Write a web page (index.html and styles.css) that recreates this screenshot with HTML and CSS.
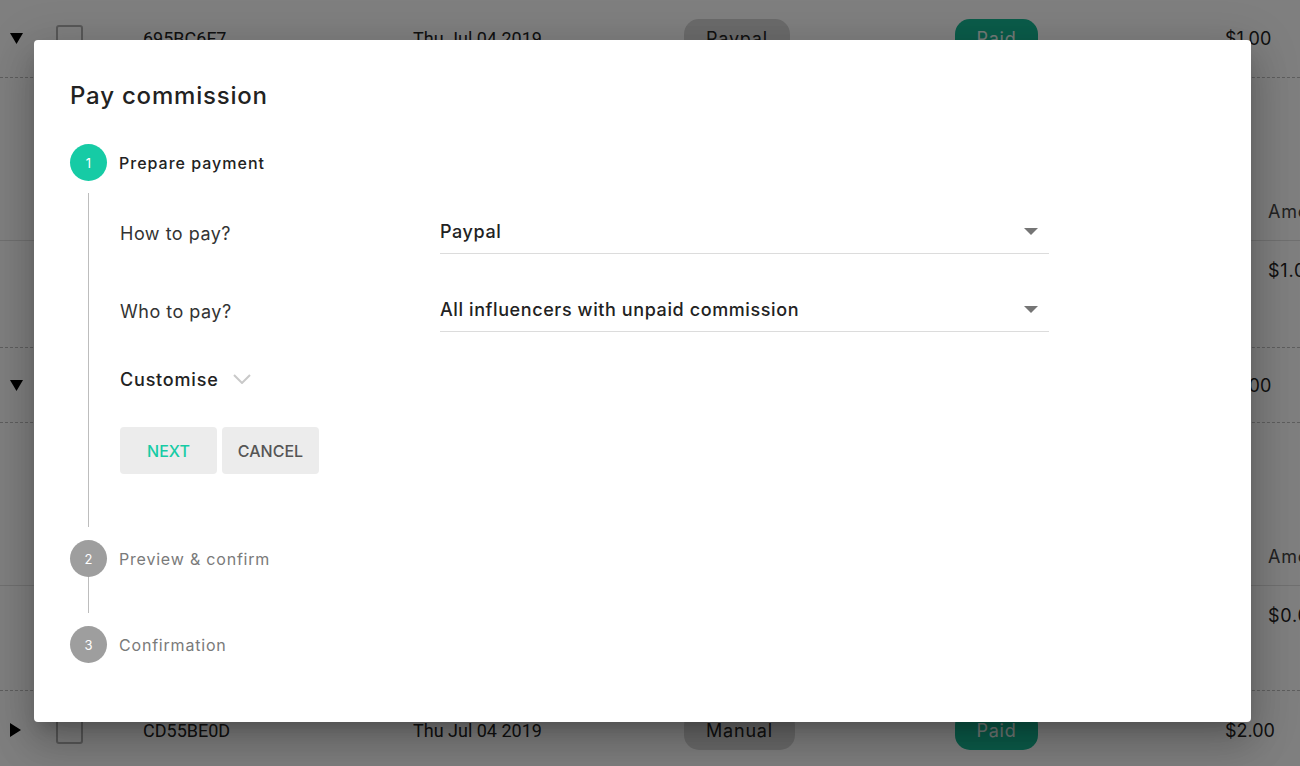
FILE: index.html
```html
<!DOCTYPE html>
<html lang="en">
<head>
<meta charset="utf-8">
<title>Pay commission</title>
<link rel="stylesheet" href="styles.css">
</head>
<body>
<div class="page">
  <div class="row row-a">
    <div class="cell tri"><svg width="13" height="11" viewBox="0 0 13 11"><polygon points="0,0 13,0 6.5,11" fill="#000"/></svg></div>
    <div class="cell"><span class="checkbox"></span></div>
    <div class="cell mono">695BC6F7</div>
    <div class="cell mono">Thu Jul 04 2019</div>
    <div class="cell"><span class="chip chip-grey">Paypal</span></div>
    <div class="cell"><span class="chip chip-green">Paid</span></div>
    <div class="cell amount">$1.00</div>
  </div>
  <div class="expand expand-a">
    <div class="subrow subhead"><span class="subcell">Amount</span></div>
    <div class="subrow subdata"><span class="subcell">$1.00</span></div>
  </div>
  <div class="row row-b">
    <div class="cell tri"><svg width="13" height="11" viewBox="0 0 13 11"><polygon points="0,0 13,0 6.5,11" fill="#000"/></svg></div>
    <div class="cell"></div>
    <div class="cell"></div>
    <div class="cell"></div>
    <div class="cell"></div>
    <div class="cell"></div>
    <div class="cell amount">$1.00</div>
  </div>
  <div class="expand expand-b">
    <div class="subrow subhead"><span class="subcell">Amount</span></div>
    <div class="subrow subdata"><span class="subcell">$0.00</span></div>
  </div>
  <div class="row row-c">
    <div class="cell tri"><svg width="11" height="14" viewBox="0 0 11 14"><polygon points="0,0 11,7 0,14" fill="#000"/></svg></div>
    <div class="cell"><span class="checkbox"></span></div>
    <div class="cell mono">CD55BE0D</div>
    <div class="cell mono">Thu Jul 04 2019</div>
    <div class="cell"><span class="chip chip-grey">Manual</span></div>
    <div class="cell"><span class="chip chip-green">Paid</span></div>
    <div class="cell amount">$2.00</div>
  </div>
</div>

<div class="backdrop"></div>

<div class="dialog" role="dialog">
  <h2 class="dialog-title">Pay commission</h2>
  <div class="stepper">
    <div class="step">
      <div class="step-head">
        <span class="step-icon active">1</span>
        <span class="step-label active">Prepare payment</span>
      </div>
      <div class="step-body">
        <div class="field">
          <span class="field-label">How to pay?</span>
          <div class="select">
            <span class="select-value">Paypal</span>
            <svg class="select-arrow" width="14" height="7" viewBox="0 0 14 7"><polygon points="0,0 14,0 7,7" fill="#757575"/></svg>
          </div>
        </div>
        <div class="field field-2">
          <span class="field-label">Who to pay?</span>
          <div class="select">
            <span class="select-value">All influencers with unpaid commission</span>
            <svg class="select-arrow" width="14" height="7" viewBox="0 0 14 7"><polygon points="0,0 14,0 7,7" fill="#757575"/></svg>
          </div>
        </div>
        <div class="customise">
          <span>Customise</span>
          <svg width="18" height="10" viewBox="0 0 18 10"><polyline points="1,1 9,9 17,1" fill="none" stroke="#c9c9c9" stroke-width="2"/></svg>
        </div>
        <div class="actions">
          <button class="btn btn-next">NEXT</button>
          <button class="btn btn-cancel">CANCEL</button>
        </div>
      </div>
    </div>
    <div class="step step-2">
      <div class="step-head">
        <span class="step-icon">2</span>
        <span class="step-label">Preview &amp; confirm</span>
      </div>
      <div class="connector"></div>
    </div>
    <div class="step step-3">
      <div class="step-head">
        <span class="step-icon">3</span>
        <span class="step-label">Confirmation</span>
      </div>
    </div>
  </div>
</div>
</body>
</html>
```

FILE: styles.css
```css
* { box-sizing: border-box; }

html, body {
  margin: 0;
  padding: 0;
}

body {
  width: 1300px;
  height: 766px;
  overflow: hidden;
  background: #fff;
  font-family: Inter, "Open Sans", sans-serif;
  color: #222;
  position: relative;
}

/* ---------- background table ---------- */
.page {
  width: 1300px;
}

.row {
  display: grid;
  grid-template-columns: 56px 87px 270px 271px 271px 270px 1fr;
  align-items: center;
  border-bottom: 1px dashed #bdbdbd;
}

.row-a { height: 78px; }
.row-b { height: 75px; }
.row-c { height: 78px; border-bottom: none; }

.cell {
  font-size: 17px;
  color: #333;
  white-space: nowrap;
}

.tri {
  padding-left: 10px;
  display: flex;
  align-items: center;
}

.mono {
  font-family: Roboto, "Liberation Sans", sans-serif;
  font-size: 18px;
  color: #222;
}

.checkbox {
  display: block;
  width: 27px;
  height: 27px;
  border: 2px solid #b0b0b0;
  border-radius: 3px;
  background: #fff;
}

.chip {
  display: inline-flex;
  align-items: center;
  justify-content: center;
  height: 40px;
  padding: 0 22px;
  border-radius: 15px;
  font-size: 18px;
  letter-spacing: 0.8px;
}

.chip-grey {
  background: #d6d6d6;
  color: #222;
}

.chip-green {
  background: #16b894;
  color: #e8f6f1;
  width: 83px;
  padding: 0;
}

.amount {
  font-size: 18px;
  color: #222;
}

.expand {
  border-bottom: 1px dashed #bdbdbd;
}

.expand-a { height: 270px; padding-top: 105px; }
.expand-b { height: 268px; padding-top: 105px; }

.subrow {
  display: flex;
  align-items: center;
  padding-left: 1268px;
  font-size: 18px;
  white-space: nowrap;
  letter-spacing: 0.8px;
}

.subhead {
  height: 58px;
  color: #444;
  border-bottom: 1px solid #e0e0e0;
}

.subdata {
  height: 58px;
  color: #222;
}

/* ---------- backdrop ---------- */
.backdrop {
  position: absolute;
  inset: 0;
  background: rgba(0, 0, 0, 0.5);
}

/* ---------- dialog ---------- */
.dialog {
  position: absolute;
  left: 34px;
  top: 40px;
  width: 1217px;
  height: 682px;
  background: #fff;
  border-radius: 4px;
  padding: 40px 36px 0;
  box-shadow: 0 11px 15px -7px rgba(0,0,0,0.2), 0 24px 38px 3px rgba(0,0,0,0.14), 0 9px 46px 8px rgba(0,0,0,0.12);
}

.dialog-title {
  margin: 0;
  font-size: 24px;
  line-height: 32px;
  font-weight: 500;
  color: #222;
  letter-spacing: 0.8px;
}

.stepper {
  margin-top: 32px;
  display: flex;
  flex-direction: column;
}

.step-head {
  display: flex;
  align-items: center;
  height: 37px;
}

.step-icon {
  width: 37px;
  height: 37px;
  border-radius: 50%;
  background: #9e9e9e;
  color: #fff;
  font-size: 13px;
  display: flex;
  align-items: center;
  justify-content: center;
  flex: none;
}

.step-icon.active {
  background: #16cba5;
}

.step-label {
  margin-left: 12px;
  font-size: 16px;
  color: #7a7a7a;
  letter-spacing: 0.8px;
}

.step-label.active {
  color: #222;
  font-weight: 500;
  letter-spacing: 1px;
}

.step-body {
  margin: 12px 0 0 18px;
  height: 334px;
  border-left: 1px solid #bdbdbd;
  padding: 20px 0 0 31px;
}

.field {
  display: grid;
  grid-template-columns: 320px 609px;
  align-items: center;
}

.field-2 {
  margin-top: 37px;
}

.field-label {
  font-size: 18px;
  color: #333;
  letter-spacing: 0.5px;
}

.select {
  height: 41px;
  border-bottom: 1px solid #dcdcdc;
  display: flex;
  align-items: center;
  justify-content: space-between;
  padding: 0 11px 4px 0;
}

.select-value {
  font-size: 18px;
  font-weight: 500;
  color: #222;
  letter-spacing: 0.6px;
}

.select-arrow {
  display: block;
}

.customise {
  margin-top: 32px;
  height: 30px;
  display: flex;
  align-items: center;
  gap: 14px;
  font-size: 18px;
  font-weight: 500;
  color: #222;
  letter-spacing: 0.8px;
}

.actions {
  margin-top: 33px;
  display: flex;
  gap: 5px;
}

.btn {
  width: 97px;
  height: 47px;
  border: none;
  border-radius: 4px;
  background: #ececec;
  font-family: inherit;
  font-size: 16px;
  font-weight: 500;
  padding: 0;
}

.btn-next { color: #16cba5; }
.btn-cancel { color: #555; }

.step-2, .step-3 {
  margin-top: 13px;
}

.connector {
  margin-left: 18px;
  height: 36px;
  border-left: 1px solid #bdbdbd;
}
```
